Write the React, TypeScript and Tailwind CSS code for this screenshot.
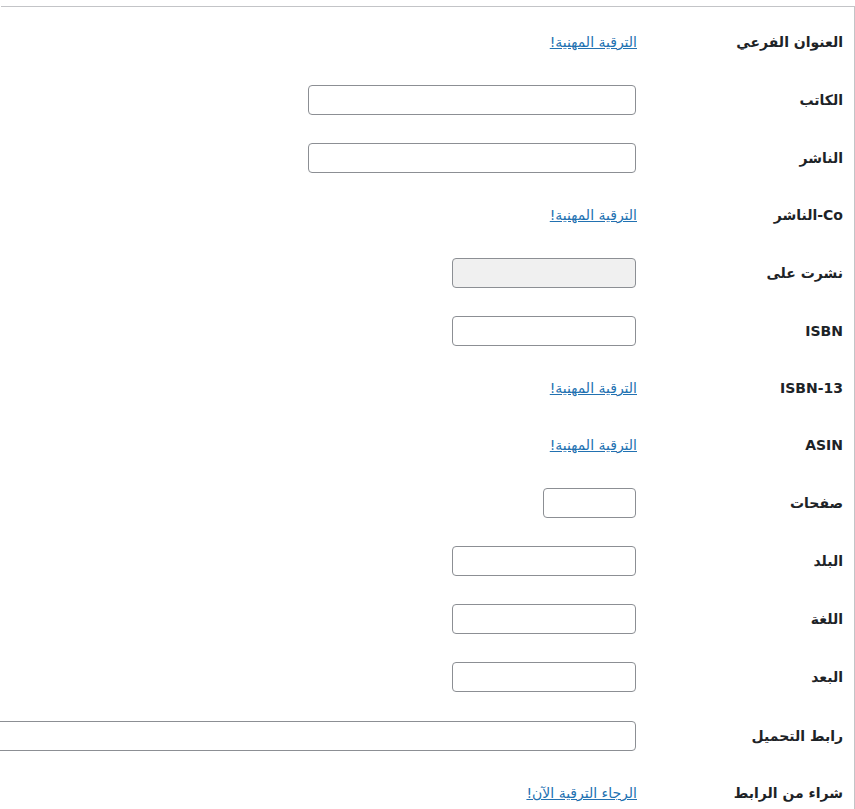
const UPGRADE = 'الترقية المهنية!'

type Row =
  | { label: string; kind: 'link'; text: string }
  | { label: string; kind: 'input'; width: string; disabled?: boolean }

const ROWS: Row[] = [
  { label: 'العنوان الفرعي', kind: 'link', text: UPGRADE },
  { label: 'الكاتب', kind: 'input', width: 'w-[328px]' },
  { label: 'الناشر', kind: 'input', width: 'w-[328px]' },
  { label: 'Co-الناشر', kind: 'link', text: UPGRADE },
  { label: 'نشرت على', kind: 'input', width: 'w-[184px]', disabled: true },
  { label: 'ISBN', kind: 'input', width: 'w-[184px]' },
  { label: 'ISBN-13', kind: 'link', text: UPGRADE },
  { label: 'ASIN', kind: 'link', text: UPGRADE },
  { label: 'صفحات', kind: 'input', width: 'w-[93px]' },
  { label: 'البلد', kind: 'input', width: 'w-[184px]' },
  { label: 'اللغة', kind: 'input', width: 'w-[184px]' },
  { label: 'البعد', kind: 'input', width: 'w-[184px]' },
  { label: 'رابط التحميل', kind: 'input', width: 'w-[680px]' },
  { label: 'شراء من الرابط', kind: 'link', text: 'الرجاء الترقية الآن!' },
]

export default function App() {
  return (
    <div
      dir="rtl"
      className="min-h-[809px] bg-white overflow-hidden text-[#1d2327]"
      style={{ fontFamily: '"DejaVu Sans", sans-serif' }}
    >
      <div className="mt-[6px] w-[854px] border-t border-r border-[#c3c4c7] pt-[7px]">
        {ROWS.map((r, i) => (
          <div
            key={i}
            className={`flex items-center ${r.kind === 'link' ? 'h-[57px]' : i === 12 ? 'h-[59px] pt-[1px]' : 'h-[58px]'}`}
          >
            <div className="w-[216px] shrink-0 pr-[11px] text-[14px] font-semibold text-right whitespace-nowrap">
              {r.label}
            </div>
            <div className="flex-1 flex">
              {r.kind === 'link' ? (
                <a href="#" className="mr-[1px] text-[14px] text-[#2271b1] underline whitespace-nowrap">
                  {r.text}
                </a>
              ) : (
                <input
                  type="text"
                  disabled={r.disabled}
                  className={`${r.width} shrink-0 h-[30px] rounded-[4px] border border-[#8c8f94] ${
                    r.disabled ? 'bg-[#f0f0f0]' : 'bg-white'
                  } mr-[2px]`}
                />
              )}
            </div>
          </div>
        ))}
      </div>
    </div>
  )
}
